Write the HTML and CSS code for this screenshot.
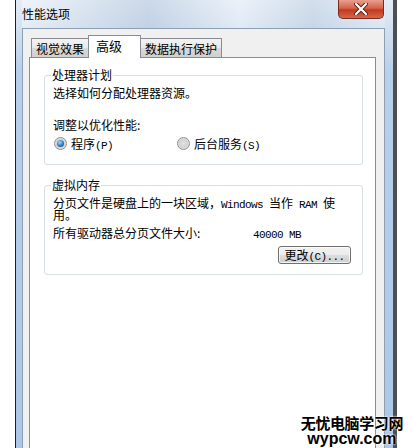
FILE: index.html
```html
<!DOCTYPE html>
<html lang="zh-CN">
<head>
    <meta charset="UTF-8">
    <meta name="viewport" content="width=device-width, initial-scale=1.0">
    <title>性能选项</title>
    <link rel="stylesheet" href="styles.css">
</head>
<body>
    <div class="screen">
        <div class="gap-left"></div>
        <div class="window">
            <div class="titlebar">
                <span class="title">性能选项</span>
                <div class="close">
                    <svg width="14" height="12" viewBox="0 0 14 12">
                        <path d="M2 1 L12 11 M12 1 L2 11" stroke="#5a1f14" stroke-width="4" stroke-linecap="round"/>
                        <path d="M2 1 L12 11 M12 1 L2 11" stroke="#fff" stroke-width="2.2" stroke-linecap="round"/>
                    </svg>
                </div>
            </div>
            <div class="client">
                <div class="tabs">
                    <div class="tab">视觉效果</div>
                    <div class="tab active">高级</div>
                    <div class="tab">数据执行保护</div>
                </div>
                <div class="panel">
                    <fieldset class="group">
                        <legend>处理器计划</legend>
                        <p class="line gap-large">选择如何分配处理器资源。</p>
                        <p class="line gap-small">调整以优化性能:</p>
                        <div class="radios">
                            <label class="option first"><span class="radio on"></span><span>程序<span class="latin">(P)</span></span></label>
                            <label class="option"><span class="radio"></span><span>后台服务<span class="latin">(S)</span></span></label>
                        </div>
                    </fieldset>

                    <fieldset class="group second">
                        <legend>虚拟内存</legend>
                        <p class="line">分页文件是硬盘上的一块区域，<span class="latin">Windows </span>当作<span class="latin"> RAM </span>使<br>用。</p>
                        <div class="line size-row">
                            <span class="size-label">所有驱动器总分页文件大小:</span>
                            <span class="latin">40000 MB</span>
                        </div>
                        <div class="actions">
                            <div class="button">更改<span class="latin">(C)...</span></div>
                        </div>
                    </fieldset>
                </div>
            </div>
        </div>
        <div class="gap-right"></div>

        <div class="watermark">
            <div class="wm-cn">无忧电脑学习网</div>
            <div class="wm-en">wypcw.com</div>
        </div>
    </div>
</body>
</html>
```

FILE: styles.css
```css
body {
    margin: 0;
    font-family: "Noto Sans CJK SC", "Noto Sans", sans-serif;
    font-size: 12px;
    color: #000;
    background-color: #fff;
}
.screen {
    position: relative;
    display: flex;
    width: 413px;
    height: 448px;
    overflow: hidden;
}
.gap-left {
    width: 15px;
    flex-shrink: 0;
}
.gap-right {
    flex: 1;
}
.window {
    display: flex;
    flex-direction: column;
    width: 363px;
    height: 520px;
    flex-shrink: 0;
    padding: 0 8px 0 6px;
    border-left: 1px solid #1e2228;
    border-right: 4px solid #4e4f52;
    background: linear-gradient(to bottom, #e3ecf6 0, #d4e2f1 26px, #b9d0ea 70px, #a9c5e7 100%);
}
.titlebar {
    display: flex;
    justify-content: space-between;
    align-items: flex-start;
    height: 28px;
    flex-shrink: 0;
    background: linear-gradient(to right, rgba(255,255,255,0.4) 0, rgba(160,180,205,0.35) 35%, rgba(255,255,255,0.3) 60%, rgba(170,190,210,0.3) 80%, rgba(255,255,255,0.2) 100%);
}
.title {
    padding-top: 8px;
    line-height: 12px;
}
.close {
    display: flex;
    align-items: center;
    justify-content: center;
    width: 44px;
    height: 18px;
    margin-right: 1px;
    border: 1px solid #7b2a1d;
    border-top: none;
    border-radius: 0 0 5px 5px;
    background: linear-gradient(to bottom, #e6a08f 0, #d7634a 45%, #c2391f 55%, #d4684b 100%);
}
.client {
    flex: 1;
    display: flex;
    flex-direction: column;
    padding: 6px 8px 0 6px;
    border: 1px solid #8e9fb4;
    border-bottom: none;
    background-color: #f0f0f0;
}
.tabs {
    display: flex;
    align-items: flex-end;
    height: 23px;
    margin-bottom: -1px;
    padding-left: 2px;
}
.tab {
    height: 19px;
    margin-bottom: 1px;
    padding: 0 4px;
    line-height: 19px;
    border: 1px solid #898c95;
    border-bottom: none;
    box-sizing: border-box;
    background: linear-gradient(to bottom, #f3f3f3 0, #e9e9e9 50%, #d9d9d9 51%, #cfcfcf 100%);
}
.tab + .tab {
    margin-left: -1px;
}
.tab.active {
    position: relative;
    z-index: 1;
    height: 23px;
    margin-bottom: 0;
    padding: 0 18px 0 7px;
    line-height: 19px;
    font-size: 13px;
    background: #fff;
}
.panel {
    flex: 1;
    border: 1px solid #898c95;
    background-color: #fff;
}
.group {
    margin: 11px 12px 0 14px;
    padding: 6px 10px 14px 8px;
    border: 1px solid #d5dfe5;
    border-radius: 3px;
}
.group.second {
    margin-top: 14px;
    padding-bottom: 10px;
}
.group legend {
    margin-left: -2px;
    padding: 0 1px;
    line-height: 12px;
}
.line {
    margin: 0;
    line-height: 12px;
}
.gap-large {
    margin-bottom: 20px;
}
.gap-small {
    margin-bottom: 6px;
}
.latin {
    font-family: "Liberation Mono", monospace;
    font-size: 11px;
    line-height: 8px;
    letter-spacing: -0.6px;
}
.radios {
    display: flex;
    line-height: 12px;
    padding-left: 1px;
}
.option {
    display: flex;
    align-items: center;
}
.option.first {
    width: 123px;
}
.radio {
    position: relative;
    width: 11px;
    height: 11px;
    margin-right: 4px;
    border: 1px solid #8f8f8f;
    border-radius: 50%;
    background: radial-gradient(circle at 50% 50%, #e4e4e4 0, #d2d2d2 50%, #f6f6f6 100%);
}
.radio.on::after {
    content: "";
    position: absolute;
    left: 2px;
    top: 2px;
    width: 7px;
    height: 7px;
    border-radius: 50%;
    background: radial-gradient(circle at 40% 35%, #a8dcf8 0, #2f79c0 55%, #0c3f78 100%);
}
.size-row {
    display: flex;
    align-items: baseline;
    margin-top: 6px;
}
.size-label {
    width: 200px;
}
.actions {
    display: flex;
    justify-content: flex-end;
    margin-top: 7px;
}
.button {
    width: 71px;
    height: 16px;
    margin-right: 1px;
    line-height: 16px;
    text-align: center;
    border: 1px solid #707070;
    border-radius: 3px;
    background: linear-gradient(to bottom, #f2f2f2 0, #ebebeb 50%, #dddddd 51%, #cfcfcf 100%);
    box-shadow: inset 0 0 0 1px rgba(255, 255, 255, 0.7);
}
.watermark {
    position: absolute;
    right: 10px;
    bottom: 1px;
    text-align: center;
    font-weight: bold;
    color: #000;
    text-shadow: 0 0 2px #fff, 0 0 2px #fff;
}
.wm-cn {
    font-size: 15px;
    line-height: 17px;
    letter-spacing: -0.4px;
}
.wm-en {
    font-family: "Liberation Sans", Arial, sans-serif;
    font-size: 16px;
    line-height: 16px;
}
```
